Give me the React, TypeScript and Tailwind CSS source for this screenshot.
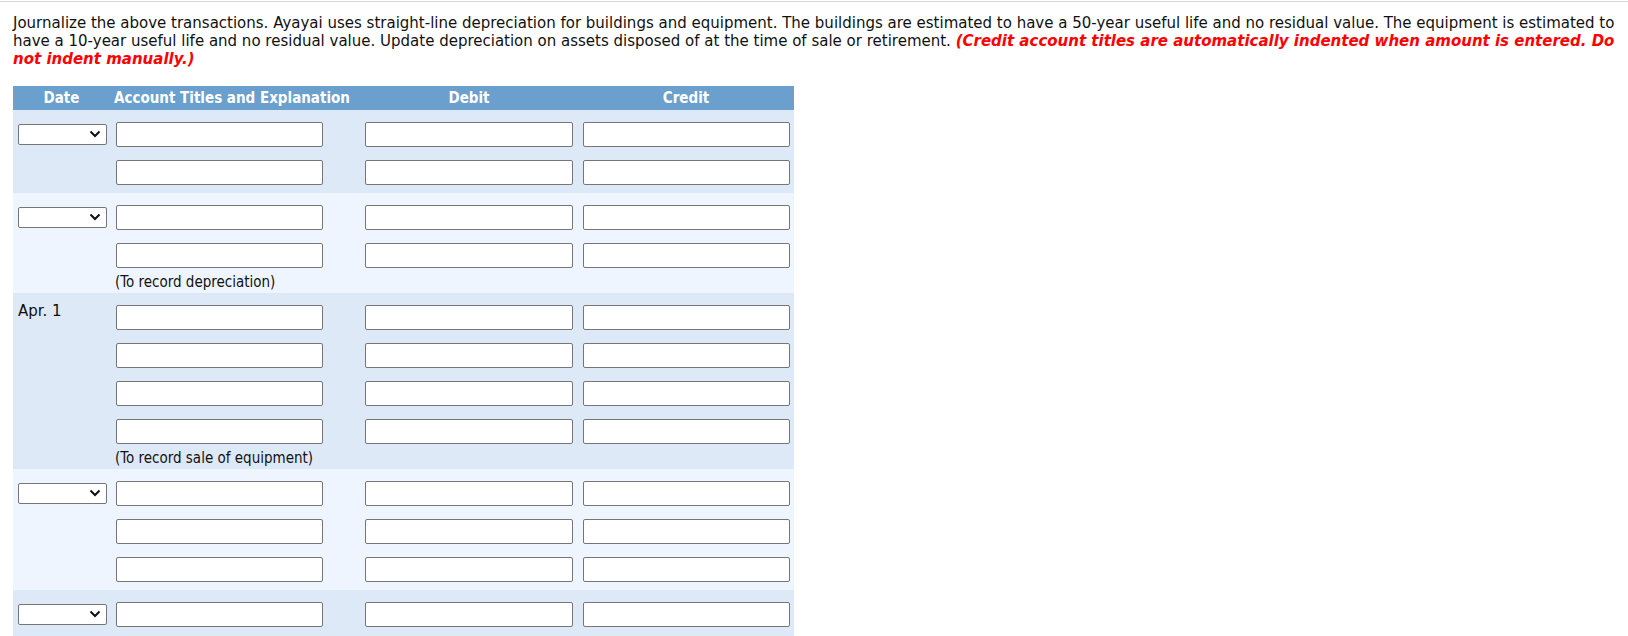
import React from "react";

type Group = {
  date?: "select" | string;
  rows: number;
  label?: string;
  tone: "a" | "b";
};

// Journal groups, top to bottom, as in the worksheet
const groups: Group[] = [
  { date: "select", rows: 2, tone: "a" },
  { date: "select", rows: 2, label: "(To record depreciation)", tone: "b" },
  { date: "Apr. 1", rows: 4, label: "(To record sale of equipment)", tone: "a" },
  { date: "select", rows: 3, tone: "b" },
  { date: "select", rows: 2, tone: "a" },
];

function FakeSelect() {
  return (
    <div className="flex h-[21px] w-[89px] items-center justify-end rounded-[2px] border border-[#767676] bg-white pr-[5px]">
      <svg width="12" height="8" viewBox="0 0 12 8" fill="none">
        <path d="M1.5 1.5 L6 6 L10.5 1.5" stroke="#111" strokeWidth="2" />
      </svg>
    </div>
  );
}

function Box({ w }: { w: string }) {
  return <input type="text" className={`h-[25px] ${w} rounded-[2px] border border-[#767676] bg-white outline-none`} />;
}

function JournalGroup({ g }: { g: Group }) {
  const bg = g.tone === "a" ? "bg-[#dee9f8]" : "bg-[#eef5fe]";
  return (
    <div className={`${bg} pt-[5px] pb-[2px]`}>
      {Array.from({ length: g.rows }).map((_, i) => (
        <div key={i} className="grid h-[38px] grid-cols-[97px_250px_218px_216px] items-center">
          <div className="flex items-center self-stretch pl-[5px]">
            {i === 0 && g.date === "select" && <FakeSelect />}
            {i === 0 && g.date && g.date !== "select" && (
              <span
                className="self-start pt-[4px] text-[15px] leading-[18px] text-[#111]"
                style={{ fontFamily: "'DejaVu Sans', Verdana, sans-serif" }}
              >
                {g.date}
              </span>
            )}
          </div>
          <div className="pl-[6px]">
            <Box w="w-[207px]" />
          </div>
          <div className="pl-[5px]">
            <Box w="w-[208px]" />
          </div>
          <div className="pl-[5px]">
            <Box w="w-[207px]" />
          </div>
        </div>
      ))}
      {g.label && (
        <div
          className="h-[17px] pl-[102px] text-[15px] leading-[17px] text-[#111]"
          style={{ fontFamily: "'DejaVu Sans Condensed', Tahoma, sans-serif" }}
        >
          {g.label}
        </div>
      )}
    </div>
  );
}

export default function App() {
  return (
    <div className="h-[636px] overflow-hidden bg-white pt-px">
      <div className="border-t border-[#d3d9e0]" />
      <p
        className="mt-[12px] pl-[13px] pr-[10px] text-[15px] leading-[18px] text-[#111]"
        style={{ fontFamily: "'DejaVu Sans', Verdana, sans-serif" }}
      >
        Journalize the above transactions. Ayayai uses straight-line depreciation for buildings and equipment. The buildings are
        estimated to have a 50-year useful life and no residual value. The equipment is estimated to have a 10-year useful life and
        no residual value. Update depreciation on assets disposed of at the time of sale or retirement.{" "}
        <span className="font-bold italic text-[#ff0000]">
          (Credit account titles are automatically indented when amount is entered. Do not indent manually.)
        </span>
      </p>

      <div className="ml-[13px] mt-[18px] w-[781px]">
        <div
          className="grid h-[24px] grid-cols-[97px_250px_218px_216px] items-center bg-[#6b9fcd] text-[15px] font-bold text-white"
          style={{ fontFamily: "'DejaVu Sans Condensed', Tahoma, sans-serif" }}
        >
          <div className="text-center">Date</div>
          <div className="pl-[4px]">Account Titles and Explanation</div>
          <div className="text-center">Debit</div>
          <div className="text-center">Credit</div>
        </div>
        {groups.map((g, i) => (
          <JournalGroup key={i} g={g} />
        ))}
      </div>
    </div>
  );
}
